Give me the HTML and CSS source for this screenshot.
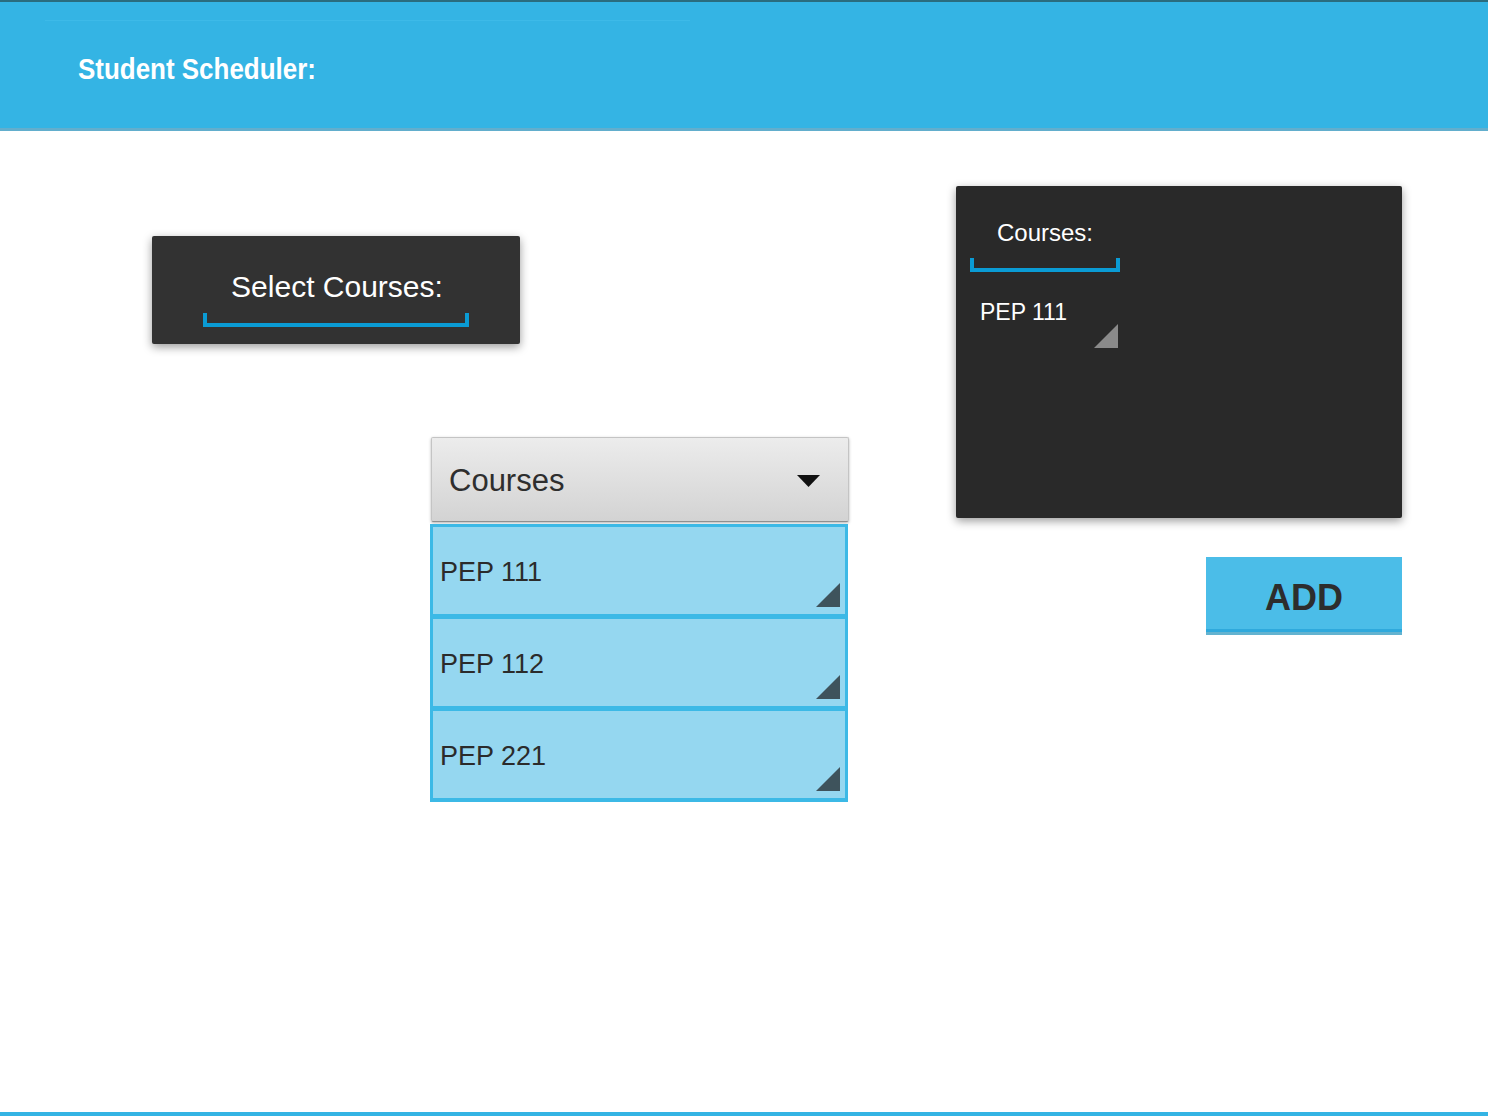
FILE: index.html
```html
<!DOCTYPE html>
<html>
<head>
<meta charset="utf-8">
<link rel="stylesheet" href="styles.css">
</head>
<body>
<div class="page">
  <header class="topbar">
    <div class="topbar-line"></div>
    <h1 class="title"><span class="title-text">Student Scheduler:</span></h1>
  </header>
  <main class="main">
    <section class="left-col">
      <div class="select-card">
        <div class="select-label">Select Courses:</div>
        <div class="bracket bracket-wide"></div>
      </div>
      <div class="dropdown">
        <div class="dropdown-head">
          <span class="dropdown-label">Courses</span>
          <svg class="caret" width="23" height="12" viewBox="0 0 23 12"><polygon points="0,0 23,0 11.5,12" fill="#111"/></svg>
        </div>
        <ul class="course-list">
          <li class="course-item">PEP 111<span class="corner"></span></li>
          <li class="course-item">PEP 112<span class="corner"></span></li>
          <li class="course-item">PEP 221<span class="corner"></span></li>
        </ul>
      </div>
    </section>
    <section class="right-col">
      <div class="selected-box">
        <div class="selected-head">
          <div class="selected-label">Courses:</div>
          <div class="bracket bracket-small"></div>
        </div>
        <div class="selected-item">
          <span class="selected-text">PEP 111</span>
          <span class="corner-gray"></span>
        </div>
      </div>
      <button class="add-btn">ADD</button>
    </section>
  </main>
  <footer class="bottom-line"></footer>
</div>
</body>
</html>
```
FILE: styles.css
```css
html, body {
  margin: 0;
  padding: 0;
  background: #ffffff;
}
body {
  font-family: "Liberation Sans", Arial, sans-serif;
}
.page {
  width: 1488px;
  height: 1120px;
  display: flex;
  flex-direction: column;
  overflow: hidden;
}
.topbar {
  background: #34b4e4;
  border-top: 2px solid #2a6c7e;
  border-bottom: 3px solid #62aecd;
  padding-top: 18px;
  box-sizing: content-box;
  height: 108px;
}
.topbar-line {
  margin-left: 45px;
  width: 645px;
  height: 1px;
  background: #3dbae8;
}
.title {
  margin: 33px 0 0 78px;
  font-size: 30px;
  line-height: 30px;
  font-weight: bold;
  color: #ffffff;
}
.title-text {
  display: inline-block;
  transform: scaleX(0.865);
  transform-origin: left center;
}
.main {
  flex: 1;
  display: flex;
}
.left-col {
  width: 849px;
  display: flex;
  flex-direction: column;
}
.select-card {
  margin: 105px 0 0 152px;
  width: 368px;
  height: 108px;
  box-sizing: border-box;
  background: #323232;
  border-radius: 2px;
  box-shadow: 0 3px 10px rgba(0,0,0,0.4);
  padding-top: 36px;
  display: flex;
  flex-direction: column;
  align-items: center;
}
.select-label {
  font-size: 30px;
  line-height: 30px;
  color: #ffffff;
  padding-left: 2px;
}
.bracket {
  box-sizing: border-box;
  border: 4px solid #0a9bd4;
  border-top: none;
  height: 14px;
}
.bracket-wide {
  width: 266px;
  margin-top: 11px;
}
.dropdown {
  margin: 93px 0 0 431px;
  width: 418px;
}
.dropdown-head {
  height: 85px;
  box-sizing: border-box;
  background: linear-gradient(#ececec, #d3d3d3);
  border: 1px solid #c4c4c4;
  border-bottom-color: #8f8f8f;
  border-radius: 2px;
  box-shadow: 0 1px 3px rgba(0,0,0,0.3);
  display: flex;
  align-items: center;
  justify-content: space-between;
  padding: 2px 28px 0 17px;
}
.dropdown-label {
  font-size: 31px;
  color: #2e2e2e;
}
.caret {
  display: block;
}
.course-list {
  list-style: none;
  margin: 2px 0 0 -1px;
  padding: 0;
  width: 418px;
  box-sizing: border-box;
  border: 3px solid #3cb9e6;
  border-bottom-width: 4px;
  background: #3cb9e6;
}
.course-item {
  position: relative;
  height: 87px;
  box-sizing: border-box;
  background: #95d7f0;
  padding: 32px 0 0 7px;
  font-size: 27px;
  line-height: 27px;
  color: #2b2b2b;
}
.course-item + .course-item {
  margin-top: 5px;
}
.corner {
  position: absolute;
  right: 5px;
  bottom: 7px;
  width: 24px;
  height: 24px;
  background: #3e535c;
  clip-path: polygon(100% 0, 100% 100%, 0 100%);
}
.right-col {
  margin-left: 107px;
  width: 446px;
  display: flex;
  flex-direction: column;
  align-items: flex-end;
}
.selected-box {
  margin-top: 55px;
  width: 446px;
  height: 332px;
  box-sizing: border-box;
  background: #292929;
  border-radius: 2px;
  box-shadow: 0 3px 10px rgba(0,0,0,0.4);
  padding: 35px 0 0 14px;
  align-self: stretch;
}
.selected-head {
  width: 150px;
}
.selected-label {
  font-size: 24px;
  line-height: 24px;
  color: #ffffff;
  text-align: center;
}
.bracket-small {
  width: 150px;
  margin-top: 13px;
}
.selected-item {
  width: 150px;
  margin-top: 29px;
  display: flex;
  flex-direction: column;
}
.selected-text {
  padding-left: 10px;
  font-size: 23px;
  line-height: 23px;
  color: #ffffff;
}
.corner-gray {
  align-self: flex-end;
  margin-right: 2px;
  width: 24px;
  height: 24px;
  background: #8a8a8a;
  clip-path: polygon(100% 0, 100% 100%, 0 100%);
}
.add-btn {
  margin-top: 39px;
  width: 196px;
  height: 78px;
  box-sizing: border-box;
  border: none;
  border-bottom: 3px solid #63b3d0;
  box-shadow: inset 0 -3px 0 #2fa9dc;
  background: #4bbde8;
  padding: 6px 0 0 0;
  font-family: "Liberation Sans", Arial, sans-serif;
  font-weight: bold;
  font-size: 36px;
  color: #2d2d2d;
}
.bottom-line {
  height: 4px;
  background: #34b4e4;
  margin-bottom: 4px;
}
```
